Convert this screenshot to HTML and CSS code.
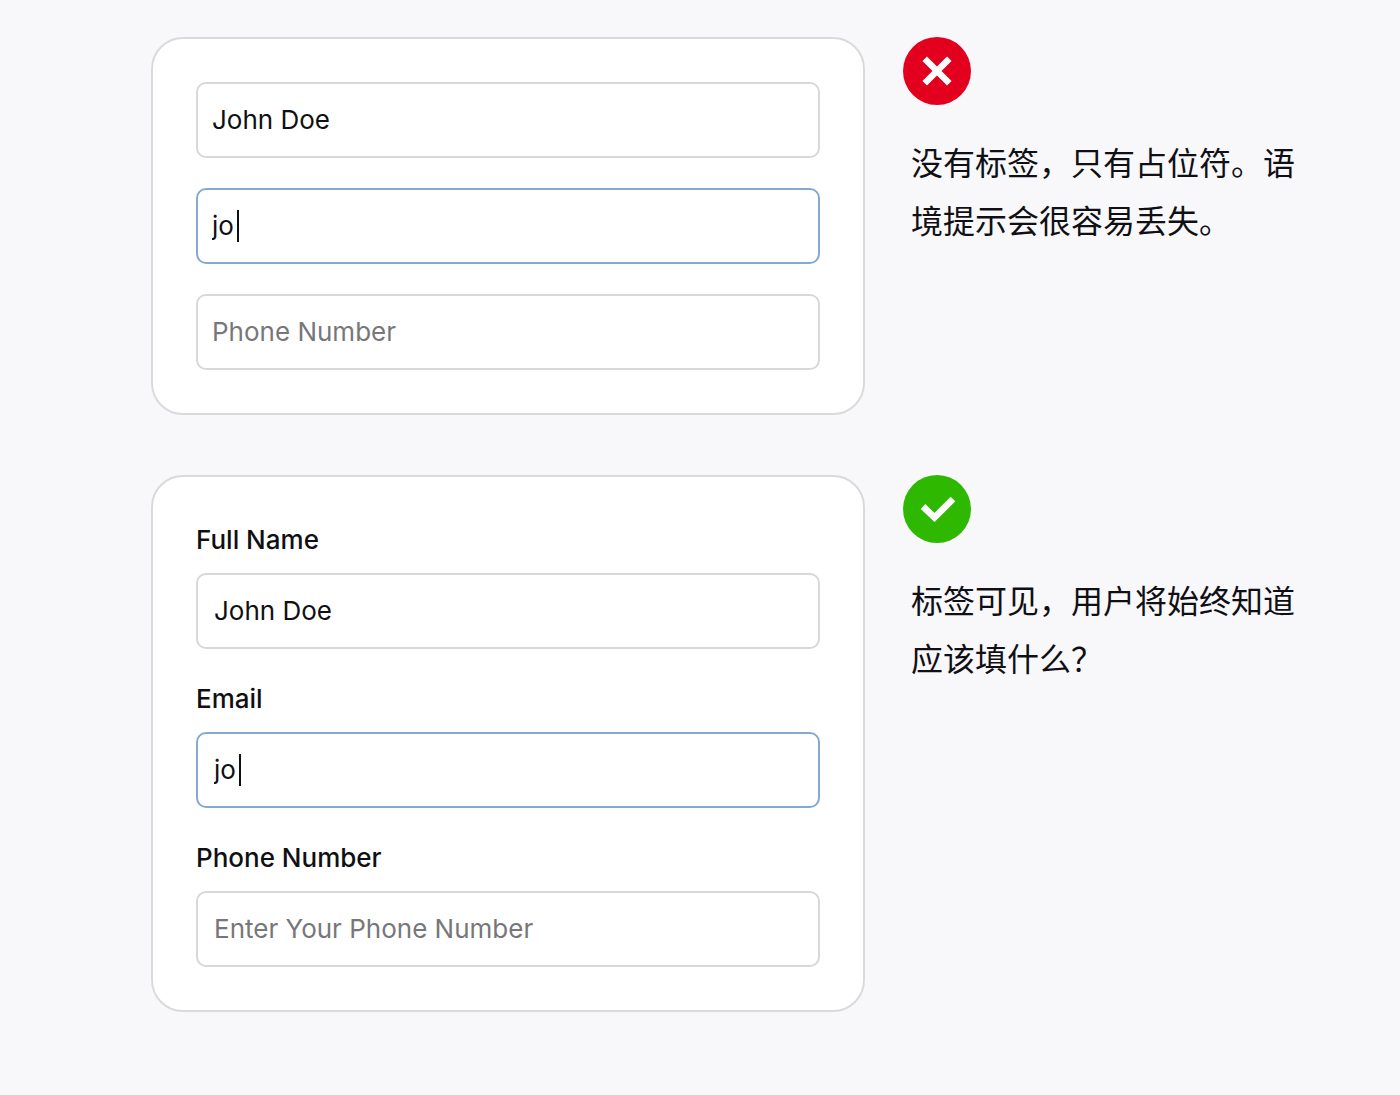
FILE: index.html
```html
<!DOCTYPE html>
<html lang="zh-CN">
<head>
  <meta charset="UTF-8">
  <meta name="viewport" content="width=device-width, initial-scale=1.0">
  <title>表单标签</title>
  <link rel="stylesheet" href="styles.css">
</head>
<body>
  <main class="page">
    <section class="example">
      <form class="card">
        <div class="field">
          <input type="text" class="input" aria-label="Full Name" placeholder="Full Name" value="John Doe">
        </div>
        <div class="field">
          <input type="text" class="input active" aria-label="Email" placeholder="Email" value="jo">
          <span class="caret"></span>
        </div>
        <div class="field">
          <input type="tel" class="input" aria-label="Phone Number" placeholder="Phone Number">
        </div>
      </form>
      <div class="note">
        <svg class="icon" viewBox="0 0 68 68" aria-hidden="true">
          <circle cx="34" cy="34" r="34" fill="#e3001f"/>
          <path d="M21.7 21.7L46.3 46.3M46.3 21.7L21.7 46.3" fill="none" stroke="#fff" stroke-width="6.4"/>
        </svg>
        <p class="note-text">没有标签，只有占位符。语境提示会很容易丢失。</p>
      </div>
    </section>

    <section class="example">
      <form class="card labelled">
        <label class="label" for="name">Full Name</label>
        <div class="field">
          <input type="text" class="input" id="name" value="John Doe">
        </div>
        <label class="label" for="email">Email</label>
        <div class="field">
          <input type="text" class="input active" id="email" value="jo">
          <span class="caret"></span>
        </div>
        <label class="label" for="phone">Phone Number</label>
        <div class="field">
          <input type="tel" class="input" id="phone" placeholder="Enter Your Phone Number">
        </div>
      </form>
      <div class="note">
        <svg class="icon" viewBox="0 0 68 68" aria-hidden="true">
          <circle cx="34" cy="34" r="34" fill="#2eb800"/>
          <path d="M20 31.5L31.5 42.5L50 24" fill="none" stroke="#fff" stroke-width="6.6"/>
        </svg>
        <p class="note-text">标签可见，用户将始终知道应该填什么？</p>
      </div>
    </section>
  </main>
</body>
</html>
```
FILE: styles.css
```css
* {
  margin: 0;
  padding: 0;
  box-sizing: border-box;
}

body {
  background: #f8f8fb;
  color: #101014;
  font-family: Inter, 'Noto Sans CJK SC', sans-serif;
}

.page {
  display: flex;
  flex-direction: column;
  gap: 60px;
  padding: 37px 91px 83px 151px;
}

.example {
  display: flex;
  align-items: flex-start;
  gap: 38px;
}

.card {
  flex: 1;
  padding: 43px;
  background: #fff;
  border: 2px solid #dadadc;
  border-radius: 32px;
}

.field {
  position: relative;
}

.field + .field,
.field + .label {
  margin-top: 30px;
}

.label {
  display: block;
  margin-bottom: 13px;
  font-size: 26px;
  font-weight: 500;
  line-height: 40px;
}

.input {
  display: block;
  width: 100%;
  height: 76px;
  padding: 0 14px 2px;
  background: #fff;
  border: 2px solid #d8d8da;
  border-radius: 10px;
  color: #101014;
  font-family: inherit;
  font-size: 26px;
  font-weight: 400;
  outline: none;
}

.labelled .input {
  padding: 0 16px 2px;
}

.input::placeholder {
  color: #77777a;
  opacity: 1;
}

.input.active {
  border-color: #85a9d0;
}

/* Cursor de texto dos campos em edição */
.caret {
  position: absolute;
  top: 22px;
  left: 41px;
  width: 2px;
  height: 32px;
  background: #101014;
}

.labelled .caret {
  left: 43px;
}

.note {
  flex: 0 0 406px;
}

.icon {
  display: block;
  width: 68px;
  height: 68px;
}

.note-text {
  margin-top: 27px;
  padding-left: 8px;
  font-family: 'Noto Sans CJK SC', sans-serif;
  font-size: 32px;
  line-height: 58px;
}

@media (max-width: 1000px) {
  .page {
    padding: 24px;
  }

  .example {
    flex-direction: column;
  }

  .card {
    width: 100%;
  }

  .note {
    flex: none;
  }
}
```
